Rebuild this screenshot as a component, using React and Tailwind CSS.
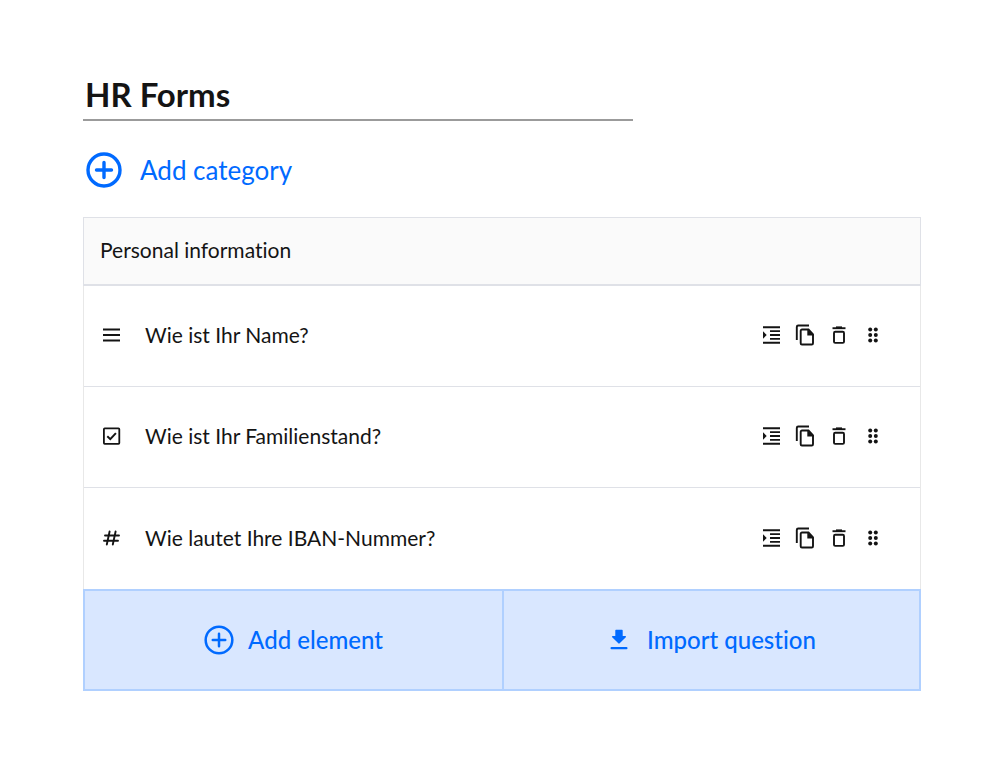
import { useState } from 'react';

function PlusCircleIcon({ className, strokeWidth }) {
  return (
    <svg viewBox="0 0 36 36" className={className} fill="none" stroke="currentColor" strokeLinecap="round" aria-hidden="true">
      <circle cx="18" cy="18" r="16" strokeWidth={strokeWidth} />
      <path d="M18 10.5v15M10.5 18h15" strokeWidth={strokeWidth} />
    </svg>
  );
}

function DownloadIcon() {
  return (
    <svg viewBox="0 0 24 24" className="h-6 w-6" fill="currentColor" aria-hidden="true">
      <path d="M9 1.700h6a.7.7 0 0 1 .7.7v5.500h2.600c.7 0 1 .8.5 1.300l-6.100 6.100a1 1 0 0 1-1.400 0L5.200 9.200c-.5-.5-.2-1.300.5-1.300h2.600V2.400A.7.7 0 0 1 9 1.700z" />
      <rect x="3.500" y="19" width="17" height="2.200" rx="1" />
    </svg>
  );
}

// Question type icons
function TextIcon() {
  return (
    <svg viewBox="0 0 24 24" className="h-6 w-6" fill="none" stroke="currentColor" strokeWidth="2" aria-hidden="true">
      <path d="M3 6.500h17M3 12h17M3 17.500h17" />
    </svg>
  );
}

function CheckIcon() {
  return (
    <svg viewBox="0 0 24 24" className="h-6 w-6" fill="none" stroke="currentColor" strokeWidth="1.800" aria-hidden="true">
      <rect x="3.900" y="4.400" width="15.400" height="15.400" rx=".8" />
      <path d="M7.300 12.200l3 2.900 5.600-6" strokeWidth="2" />
    </svg>
  );
}

function NumberIcon() {
  return (
    <svg viewBox="0 0 24 24" className="h-6 w-6" fill="none" stroke="currentColor" strokeWidth="1.900" strokeLinecap="round" aria-hidden="true">
      <path d="M9.600 5.500L6.800 18.500M15.600 5.500l-2.800 13M5 9.500h14M4 14.700h14" />
    </svg>
  );
}

// Row action icons
function IndentIcon() {
  return (
    <svg viewBox="0 0 24 24" className="h-6 w-6" fill="none" stroke="currentColor" strokeWidth="1.900" aria-hidden="true">
      <path d="M4 4.200h17M11 8.100h10M11 12h10M11 15.900h10M4 19.800h17" />
      <path d="M4 8.300v7.400l3.700-3.700z" fill="currentColor" stroke="none" />
    </svg>
  );
}

function CopyIcon() {
  return (
    <svg viewBox="0 0 24 24" className="h-6 w-6" fill="none" stroke="currentColor" strokeWidth="1.900" aria-hidden="true">
      <path d="M16 2.500H5.200a1.400 1.400 0 0 0-1.400 1.400V17" />
      <path d="M9 6.500h6.500l4.500 4.800V20.200a1.300 1.300 0 0 1-1.300 1.300H9a1.300 1.300 0 0 1-1.300-1.300V7.800A1.300 1.300 0 0 1 9 6.500z" />
      <path d="M14.300 6v6.500h6.500z" fill="currentColor" stroke="none" />
    </svg>
  );
}

function TrashIcon() {
  return (
    <svg viewBox="0 0 24 24" className="h-6 w-6" fill="none" stroke="currentColor" strokeWidth="1.900" aria-hidden="true">
      <path d="M5.500 5.200h13" />
      <path d="M9 4.400h6" strokeWidth="2" />
      <rect x="7" y="8.700" width="10" height="11.200" rx="1.200" />
    </svg>
  );
}

function DragIcon() {
  return (
    <svg viewBox="0 0 24 24" className="h-6 w-6" fill="currentColor" aria-hidden="true">
      {[6.5, 12, 17.5].map((y) => (
        <g key={y}>
          <circle cx="9.200" cy={y} r="2" />
          <circle cx="14.800" cy={y} r="2" />
        </g>
      ))}
    </svg>
  );
}

const questions = [
  { id: 1, label: 'Wie ist Ihr Name?', Icon: TextIcon },
  { id: 2, label: 'Wie ist Ihr Familienstand?', Icon: CheckIcon },
  { id: 3, label: 'Wie lautet Ihre IBAN-Nummer?', Icon: NumberIcon },
];

const actions = [
  { name: 'Indent', Icon: IndentIcon },
  { name: 'Copy', Icon: CopyIcon },
  { name: 'Delete', Icon: TrashIcon },
  { name: 'Move', Icon: DragIcon },
];

function QuestionRow({ label, Icon }) {
  return (
    <li className="flex h-[101px] items-center border-b border-[#dfe1e7] pb-[2px] pl-4 pr-[35px] last:border-b-0">
      <Icon />
      <span className="ml-[21px] flex-1 text-[21px] leading-7">{label}</span>
      <div className="flex gap-[10px]">
        {actions.map(({ name, Icon: ActionIcon }) => (
          <button key={name} type="button" aria-label={name} className="cursor-pointer">
            <ActionIcon />
          </button>
        ))}
      </div>
    </li>
  );
}

export default function App() {
  const [title, setTitle] = useState('HR Forms');

  return (
    <main className="min-h-screen bg-white px-[83px] py-[68px] font-['Lato',sans-serif] text-[#141414] [font-variant-ligatures:none]">
      <input
        type="text"
        aria-label="Form title"
        value={title}
        onChange={(e) => setTitle(e.target.value)}
        className="block h-[53px] w-full max-w-[550px] border-b-2 border-[#9b9b9b] px-[2px] text-[33px] font-bold outline-none"
      />

      <button type="button" className="mt-[31px] ml-[3px] flex cursor-pointer items-center gap-[18px] text-[26px] leading-9 text-[#006aff]">
        <PlusCircleIcon className="h-9 w-9" strokeWidth="3.400" />
        Add category
      </button>

      <section className="mt-[29px]">
        <h2 className="flex h-[69px] items-center border border-b-2 border-[#dfe1e7] bg-[#fafafa] px-4 pb-[2px] text-[21px] leading-7">
          Personal information
        </h2>
        <ul className="border-x border-[#e8e8e8]">
          {questions.map((q) => (
            <QuestionRow key={q.id} label={q.label} Icon={q.Icon} />
          ))}
        </ul>
        <div className="grid h-[102px] grid-cols-2 border-2 border-[#b0d0ff] bg-[#d9e7ff] text-2xl font-medium text-[#006aff]">
          <button type="button" className="flex cursor-pointer items-center justify-center gap-[14px]">
            <PlusCircleIcon className="h-[30px] w-[30px]" strokeWidth="3" />
            Add element
          </button>
          <button type="button" className="flex cursor-pointer items-center justify-center gap-4 border-l-2 border-[#b0d0ff]">
            <DownloadIcon />
            Import question
          </button>
        </div>
      </section>
    </main>
  );
}
